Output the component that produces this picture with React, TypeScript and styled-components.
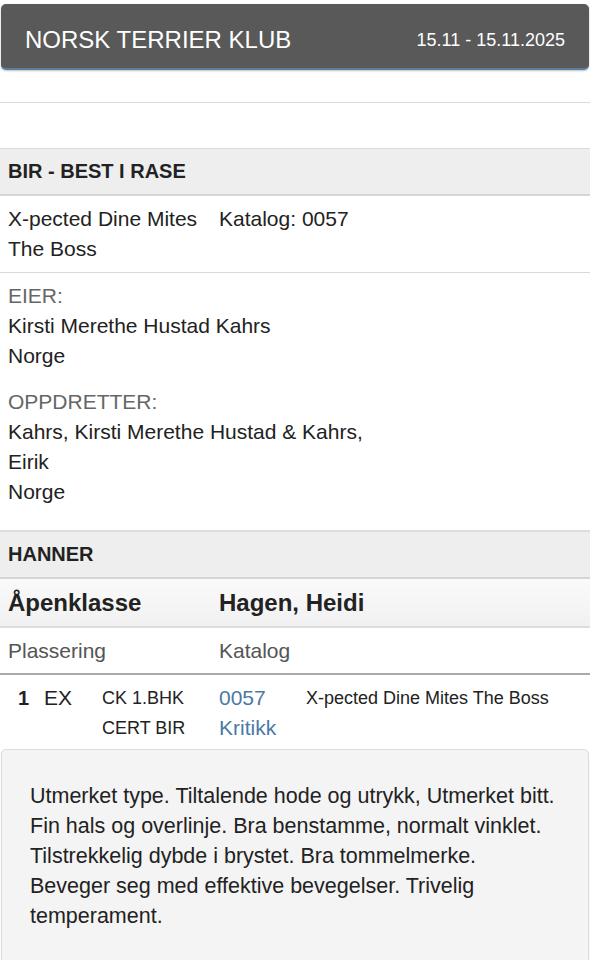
import styled, { createGlobalStyle } from 'styled-components'

const GlobalStyle = createGlobalStyle`
  body {
    margin: 0;
    background: #ffffff;
    font-family: "Liberation Sans", Arial, sans-serif;
    color: #222222;
  }
`

const Page = styled.div`
  width: 590px;
  display: flex;
  flex-direction: column;
`

const Header = styled.header`
  margin: 4px 1px 0;
  height: 66px;
  box-sizing: border-box;
  padding: 8px 24px 0;
  display: flex;
  align-items: center;
  justify-content: space-between;
  background: #595959;
  border-radius: 5px;
  border-bottom: 2px solid #5d7f9f;
  box-shadow: 0 1px 2px rgba(0, 0, 0, 0.25);
  color: #ffffff;
`

const Title = styled.h1`
  margin: 0;
  font-size: 24px;
  font-weight: normal;
`

const Dates = styled.span`
  font-size: 18px;
`

const Spacer = styled.div<{ $h: number }>`
  height: ${(p) => p.$h}px;
  border-bottom: 1px solid #d9d9d9;
`

const SectionHead = styled.h2`
  margin: 0;
  height: 47px;
  box-sizing: border-box;
  padding: 0 8px;
  display: flex;
  align-items: center;
  background: #eeeeee;
  border-bottom: 2px solid #d6d6d6;
  font-size: 20px;
  font-weight: bold;
  color: #222222;
`

const TwoCol = styled.div`
  display: grid;
  grid-template-columns: 211px 1fr;
  padding: 8px 8px;
  font-size: 21px;
  line-height: 30px;
  border-bottom: 1px solid #d9d9d9;
`

const Details = styled.div`
  padding: 8px 8px 8px;
  font-size: 21px;
  line-height: 30px;
  border-bottom: 2px solid #dedede;
`

const Block = styled.div`
  max-width: 385px;
  margin-bottom: 16px;
  &:last-child {
    margin-bottom: 15px;
  }
`

const Label = styled.div`
  color: #666666;
`

const ClassRow = styled.div`
  display: grid;
  grid-template-columns: 211px 1fr;
  height: 49px;
  box-sizing: border-box;
  padding: 0 8px;
  align-items: center;
  background: linear-gradient(#fafafa, #f1f1f1);
  border-bottom: 2px solid #dddddd;
  font-size: 24px;
  font-weight: bold;
`

const ColHeads = styled.div`
  display: grid;
  grid-template-columns: 211px 1fr;
  height: 47px;
  box-sizing: border-box;
  padding: 0 8px;
  align-items: center;
  border-bottom: 2px solid #a9a9a9;
  font-size: 21px;
  color: #555555;
`

const Result = styled.div`
  display: grid;
  grid-template-columns: 36px 58px 117px 87px 1fr;
  padding: 8px 8px 6px;
  line-height: 30px;
  align-items: start;
`

const Place = styled.span`
  padding-left: 10px;
  font-size: 20px;
  font-weight: bold;
`

const Grade = styled.span`
  font-size: 21px;
`

const Small = styled.span`
  font-size: 18px;
`

const LinkText = styled.a`
  display: block;
  color: #4a79a6;
  font-size: 21px;
  text-decoration: none;
`

const Critique = styled.div`
  margin: 0 1px;
  min-height: 240px;
  box-sizing: border-box;
  padding: 31px 33px 31px 28px;
  background: #f4f4f4;
  border: 1px solid #dcdcdc;
  border-radius: 5px;
  box-shadow: 0 1px 2px rgba(0, 0, 0, 0.08);
  font-size: 21.5px;
  line-height: 30px;
`

function App() {
  return (
    <Page>
      <GlobalStyle />
      <Header>
        <Title>NORSK TERRIER KLUB</Title>
        <Dates>15.11 - 15.11.2025</Dates>
      </Header>
      <Spacer $h={32} />
      <Spacer $h={45} />
      <SectionHead>BIR - BEST I RASE</SectionHead>
      <TwoCol>
        <span>X-pected Dine Mites The Boss</span>
        <span>Katalog: 0057</span>
      </TwoCol>
      <Details>
        <Block>
          <Label>EIER:</Label>
          <div>Kirsti Merethe Hustad Kahrs</div>
          <div>Norge</div>
        </Block>
        <Block>
          <Label>OPPDRETTER:</Label>
          <div>Kahrs, Kirsti Merethe Hustad &amp; Kahrs, Eirik</div>
          <div>Norge</div>
        </Block>
      </Details>
      <SectionHead>HANNER</SectionHead>
      <ClassRow>
        <span>Åpenklasse</span>
        <span>Hagen, Heidi</span>
      </ClassRow>
      <ColHeads>
        <span>Plassering</span>
        <span>Katalog</span>
      </ColHeads>
      <Result>
        <Place>1</Place>
        <Grade>EX</Grade>
        <Small>
          CK 1.BHK
          <br />
          CERT BIR
        </Small>
        <div>
          <LinkText href="#">0057</LinkText>
          <LinkText href="#">Kritikk</LinkText>
        </div>
        <Small>X-pected Dine Mites The Boss</Small>
      </Result>
      <Critique>
        Utmerket type. Tiltalende hode og utrykk, Utmerket bitt. Fin hals og overlinje. Bra
        benstamme, normalt vinklet. Tilstrekkelig dybde i brystet. Bra tommelmerke. Beveger seg
        med effektive bevegelser. Trivelig temperament.
      </Critique>
    </Page>
  )
}

export default App
